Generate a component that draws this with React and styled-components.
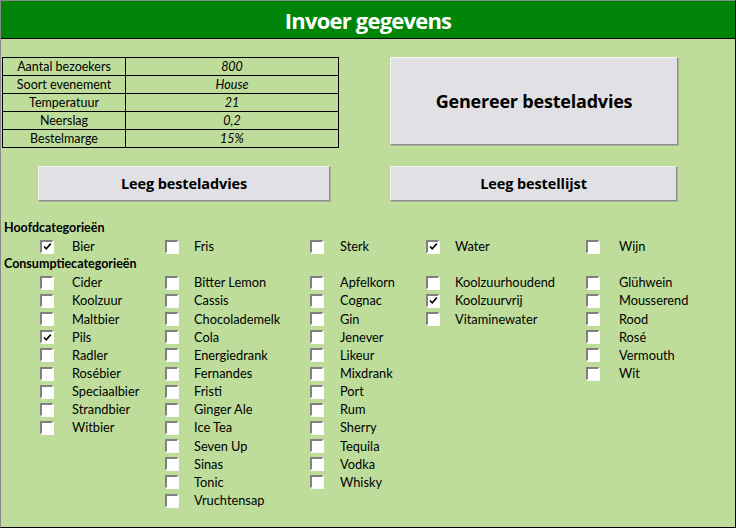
import React from "react";
import styled, { createGlobalStyle } from "styled-components";

const GlobalStyle = createGlobalStyle`
	html, body {
		margin: 0;
		padding: 0;
		background: #ffffff;
	}
	body {
		font-family: Lato, "Open Sans", sans-serif;
	}
`;

const invoer = [
	["Aantal bezoekers", "800"],
	["Soort evenement", "House"],
	["Temperatuur", "21"],
	["Neerslag", "0,2"],
	["Bestelmarge", "15%"],
];

// afstand tussen vakje en label per kolom
const gaps = [19, 16, 17, 16, 20];

const hoofd = [
	{ label: "Bier", checked: true },
	{ label: "Fris" },
	{ label: "Sterk" },
	{ label: "Water", checked: true },
	{ label: "Wijn" },
];

const consumptie = [
	[
		{ label: "Cider" },
		{ label: "Koolzuur" },
		{ label: "Maltbier" },
		{ label: "Pils", checked: true },
		{ label: "Radler" },
		{ label: "Rosébier" },
		{ label: "Speciaalbier" },
		{ label: "Strandbier" },
		{ label: "Witbier" },
	],
	[
		{ label: "Bitter Lemon" },
		{ label: "Cassis" },
		{ label: "Chocolademelk" },
		{ label: "Cola" },
		{ label: "Energiedrank" },
		{ label: "Fernandes" },
		{ label: "Fristi" },
		{ label: "Ginger Ale" },
		{ label: "Ice Tea" },
		{ label: "Seven Up" },
		{ label: "Sinas" },
		{ label: "Tonic" },
		{ label: "Vruchtensap" },
	],
	[
		{ label: "Apfelkorn" },
		{ label: "Cognac" },
		{ label: "Gin" },
		{ label: "Jenever" },
		{ label: "Likeur" },
		{ label: "Mixdrank" },
		{ label: "Port" },
		{ label: "Rum" },
		{ label: "Sherry" },
		{ label: "Tequila" },
		{ label: "Vodka" },
		{ label: "Whisky" },
	],
	[
		{ label: "Koolzuurhoudend" },
		{ label: "Koolzuurvrij", checked: true },
		{ label: "Vitaminewater" },
	],
	[
		{ label: "Glühwein" },
		{ label: "Mousserend" },
		{ label: "Rood" },
		{ label: "Rosé" },
		{ label: "Vermouth" },
		{ label: "Wit" },
	],
];

export default function App() {
	return (
		<>
			<GlobalStyle />
			<Sheet>
				<Header>Invoer gegevens</Header>
				<Body>
					<TopArea>
						<InputTable>
							<tbody>
								{invoer.map(([key, value]) => (
									<tr key={key}>
										<KeyCell>{key}</KeyCell>
										<ValueCell>{value}</ValueCell>
									</tr>
								))}
							</tbody>
						</InputTable>
						<BigButton>Genereer besteladvies</BigButton>
					</TopArea>

					<ButtonRow>
						<WideButton $width={292}>Leeg besteladvies</WideButton>
						<WideButton $width={287}>Leeg bestellijst</WideButton>
					</ButtonRow>

					<Categories>
						<SectionTitle>Hoofdcategorieën</SectionTitle>
						<Columns>
							{hoofd.map((item, i) => (
								<Column key={item.label}>
									<CheckRow item={item} gap={gaps[i]} />
								</Column>
							))}
						</Columns>

						<SectionTitle>Consumptiecategorieën</SectionTitle>
						<Columns>
							{consumptie.map((col, i) => (
								<Column key={i}>
									{col.map((item) => (
										<CheckRow key={item.label} item={item} gap={gaps[i]} />
									))}
								</Column>
							))}
						</Columns>
					</Categories>
				</Body>
			</Sheet>
		</>
	);
}

function CheckRow({ item, gap }) {
	return (
		<Row $gap={gap}>
			<Box>
				{item.checked && (
					<svg width="9" height="9" viewBox="0 0 9 9">
						<path d="M1 4.5 L3.2 6.8 L7.8 1.6" fill="none" stroke="#000" strokeWidth="1.6" />
					</svg>
				)}
			</Box>
			<Label>{item.label}</Label>
		</Row>
	);
}

const Sheet = styled.div`
	width: 734px;
	height: 526px;
	border-top: 1px solid #8a8a8a;
	border-left: 1px solid #8a8a8a;
	border-right: 1px solid #000;
	border-bottom: 1px solid #000;
	background: #bedd9b;
	display: flex;
	flex-direction: column;
	overflow: hidden;
`;

const Header = styled.div`
	height: 37px;
	border-bottom: 1px solid #000;
	background: #008508;
	color: #fff;
	font-family: "Open Sans", Lato, sans-serif;
	font-weight: 700;
	font-size: 22px;
	letter-spacing: -0.8px;
	display: flex;
	align-items: center;
	justify-content: center;
`;

const Body = styled.div`
	flex: 1;
	display: flex;
	flex-direction: column;
	padding-top: 18px;
`;

const TopArea = styled.div`
	display: flex;
	align-items: flex-start;
	padding-left: 1px;
`;

const InputTable = styled.table`
	border-collapse: collapse;
	width: 337px;
	font-size: 12.5px;
	color: #000;

	td {
		border: 1px solid #000;
		height: 17px;
		padding: 0;
		line-height: 16px;
		text-align: center;
	}
`;

const KeyCell = styled.td`
	width: 122px;
`;

const ValueCell = styled.td`
	font-style: italic;
`;

const buttonFace = `
	background: #e1e0e5;
	border: 1px solid #f4f4f4;
	border-right-color: #8c8c8c;
	border-bottom-color: #8c8c8c;
	box-shadow: 1px 1px 0 #a9b59a;
	color: #000;
	font-family: "Open Sans", Lato, sans-serif;
	font-weight: 700;
	display: flex;
	align-items: center;
	justify-content: center;
	box-sizing: border-box;
`;

const BigButton = styled.div`
	${buttonFace}
	margin-left: 51px;
	width: 288px;
	height: 88px;
	font-size: 18px;
	letter-spacing: -0.2px;
`;

const ButtonRow = styled.div`
	display: flex;
	gap: 60px;
	padding-left: 37px;
	margin-top: 18px;
`;

const WideButton = styled.div`
	${buttonFace}
	width: ${(p) => p.$width}px;
	height: 35px;
	font-size: 14.5px;
	letter-spacing: -0.1px;
`;

const Categories = styled.div`
	margin-top: 18px;
`;

const SectionTitle = styled.div`
	font-weight: 700;
	font-size: 12.5px;
	height: 18px;
	line-height: 18px;
	padding-left: 3px;
	color: #000;
`;

const Columns = styled.div`
	display: grid;
	grid-template-columns: 125px 145px 116px 160px 1fr;
	padding-left: 39px;
`;

const Column = styled.div`
	display: flex;
	flex-direction: column;
`;

const Row = styled.div`
	display: flex;
	align-items: center;
	height: 18.17px;
	gap: ${(p) => p.$gap}px;
`;

const Box = styled.div`
	width: 13px;
	height: 13px;
	box-sizing: border-box;
	background: #fff;
	border-top: 2px solid #808080;
	border-left: 2px solid #808080;
	border-right: 1px solid #fff;
	border-bottom: 1px solid #fff;
	box-shadow: 1px 1px 0 #fafafa;
	display: flex;
	align-items: center;
	justify-content: center;
	flex-shrink: 0;
`;

const Label = styled.span`
	font-size: 12.8px;
	color: #000;
	white-space: nowrap;
`;
